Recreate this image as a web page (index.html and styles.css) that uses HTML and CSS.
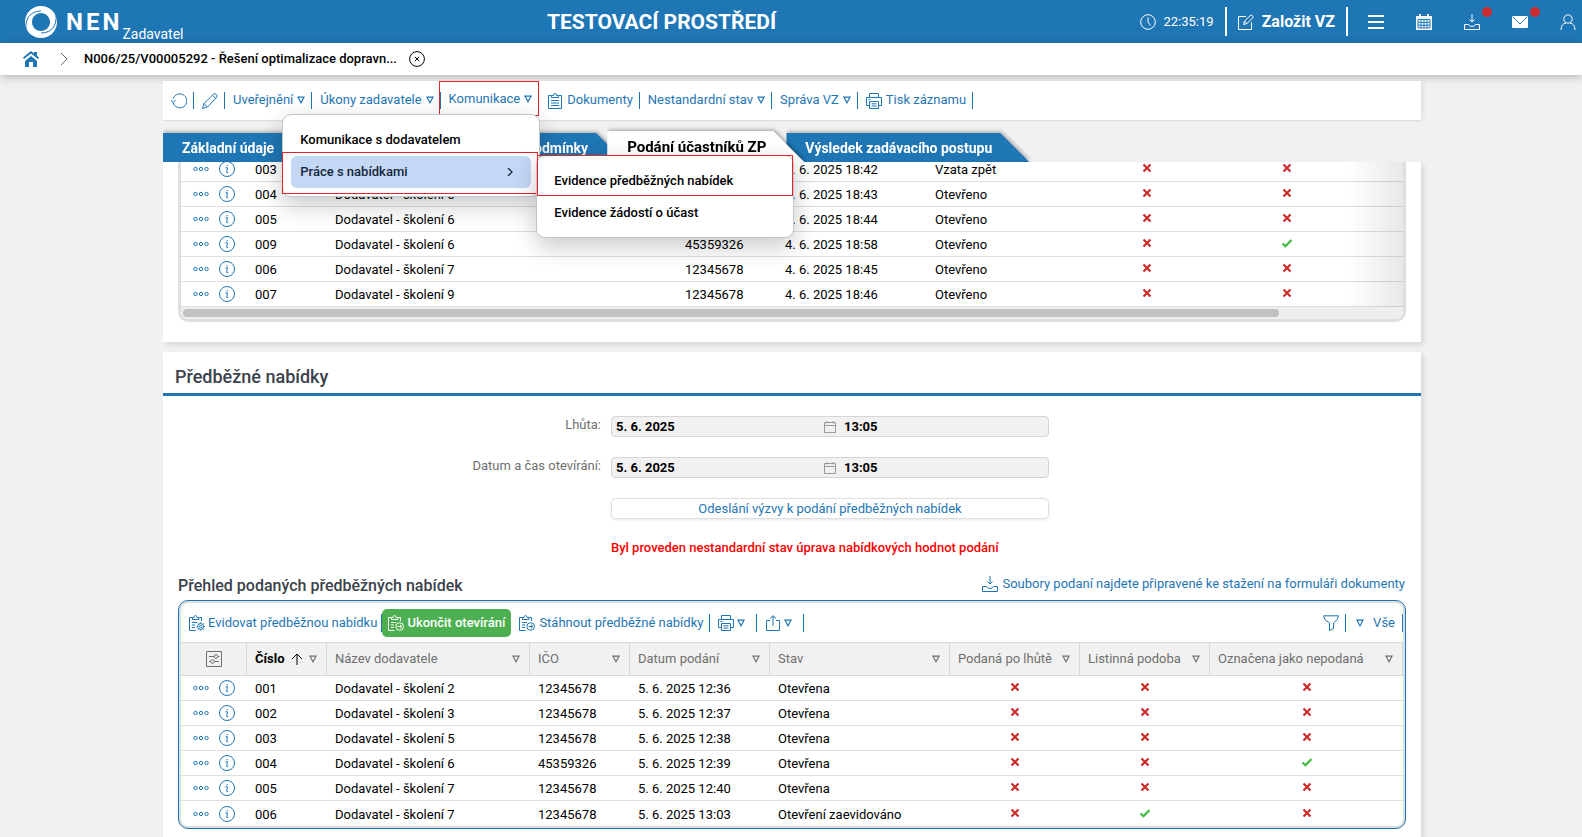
FILE: index.html
```html
<!DOCTYPE html>
<html lang="cs">
<head>
<meta charset="utf-8">
<title>NEN – Podání účastníků ZP</title>
<link rel="stylesheet" href="styles.css">
</head>
<body>
<svg class="sprite" aria-hidden="true">
  <symbol id="tri" viewBox="0 0 8 8"><path d="M1 1.200h6L4 6.800z"/></symbol>
  <symbol id="dots" viewBox="0 0 16 6"><circle cx="2.500" cy="3" r="1.700"/><circle cx="8" cy="3" r="1.700"/><circle cx="13.500" cy="3" r="1.700"/></symbol>
  <symbol id="info" viewBox="0 0 16 16"><circle cx="8" cy="8" r="7.500"/><path d="M6.500 6.800h2L7.600 11.300q0 .8 1.600.3M8.200 4v1.300"/></symbol>
  <symbol id="cross" viewBox="0 0 10 10"><path d="M1.500 1.500l7 7M8.500 1.500l-7 7"/></symbol>
  <symbol id="check" viewBox="0 0 10 10"><path d="M.5 5.500l3 2.700L9.500 2"/></symbol>
  <symbol id="printer" viewBox="0 0 16 16"><path d="M3.500 4V.5h9V4M3.500 12.500h-3v-8h15v8h-3M3.500 8.500h9v7h-9zM5.500 10.800h5M5.500 13h5M2.500 6.500h2"/></symbol>
  <symbol id="clip" viewBox="0 0 16 16"><path d="M4.500 2.500h-3v13h13v-13h-3M4.500 4.500v-2h2q0-2 1.500-2t1.500 2h2v2zM4 7.500h8M4 10h8M4 12.500h8"/></symbol>
  <symbol id="clipgear" viewBox="0 0 16 16"><path d="M3.500 2.500h-3v13h6M10.500 2.500h2v3.500M3.500 4.500v-2h1.500q0-2 1.500-2t1.500 2h2v2zM3 7.500h5M3 10h3M3 12.500h3"/><circle cx="11.700" cy="11.500" r="3"/><circle cx="11.700" cy="11.500" r="1.200"/><path d="M11.700 7.300v1.200M11.700 14.500v1.200M7.500 11.500h1.200M14.700 11.500H16M8.700 8.500l.9.9M13.800 13.600l.9.900M14.700 8.500l-.9.900M9.600 13.600l-.9.900"/></symbol>
  <symbol id="cliparrow" viewBox="0 0 16 16"><path d="M3.500 2.500h-3v13h6M10.500 2.500h2v3.500M3.500 4.500v-2h1.500q0-2 1.500-2t1.500 2h2v2zM3 7.500h5M3 10h3M3 12.500h3"/><circle cx="11.700" cy="11.500" r="3.800"/><path d="M9.500 11.500h4M12 9.800l1.800 1.700L12 13.200"/></symbol>
  <symbol id="tray" viewBox="0 0 16 16"><path d="M8 0v8M5.500 5.500L8 8l2.500-2.500M4.500 10.500h-4v5h15v-5h-4q-1 2-3.500 2t-3.500-2z"/></symbol>
  <symbol id="cal" viewBox="0 0 12 12"><path d="M.5 1.500h11v10H.5zM.5 4.500h11M3 0v2.500M9 0v2.500"/></symbol>
</svg>

<header class="topbar">
  <a class="brand" href="#">
    <svg class="logo" viewBox="0 0 32 32" aria-hidden="true"><path fill-rule="evenodd" d="M16 0C25 0 32 7 32 16S25 32 16 32 0 25 0 16 7 0 16 0zM16 7C11 7 7 11 7 16S11 25 16 25 25 21 25 16 21 7 16 7z"/><path class="logo-cut" d="M1 23C0 13 5 5 16 5M31 9c1 10-4 18-15 18"/></svg>
    <span class="brand-name">NEN</span><span class="brand-role">Zadavatel</span>
  </a>
  <strong class="env">TESTOVACÍ PROSTŘEDÍ</strong>
  <div class="tools">
    <span class="clock"><svg class="i16" viewBox="0 0 16 16"><circle cx="8" cy="8" r="7.300"/><path d="M8 3.500V8l2.500 3.500"/></svg>22:35:19</span>
    <button class="create"><svg class="i16" viewBox="0 0 16 16"><path d="M8 2.500H.5v13h13V8M5.500 10.500l1-3.500L13 .8 15.500 3 9 9.500zM6.500 7L9 9.500"/></svg>Založit VZ</button>
    <button class="tool" aria-label="Nabídka"><svg class="i16 thick" viewBox="0 0 16 16"><path d="M0 2h16M0 8h16M0 14h16"/></svg></button>
    <button class="tool" aria-label="Kalendář"><svg class="i16" viewBox="0 0 16 16"><path class="solid" d="M0 2h3V0h2v2h6V0h2v2h3v14H0z"/><path class="grid" d="M2 5.500h12v8.500H2zM2 8.300h12M2 11.200h12M5 5.500V14M8 5.500V14M11 5.500V14"/></svg></button>
    <button class="tool dot" aria-label="Stažené soubory"><svg class="i16"><use href="#tray"/></svg></button>
    <button class="tool dot" aria-label="Zprávy"><svg class="i16" viewBox="0 0 16 16"><rect class="solid" y="2" width="16" height="12" rx="1"/><path class="grid" d="M1 3l7 7 7-7"/></svg></button>
    <button class="tool" aria-label="Uživatel"><svg class="i16" viewBox="0 0 16 16"><circle cx="8" cy="5" r="4.200"/><path d="M1 16q0-6 5-7M15 16q0-6-5-7"/></svg></button>
  </div>
</header>

<nav class="crumbs" aria-label="Drobečková navigace">
  <a href="#" aria-label="Domů"><svg class="i16 home" viewBox="0 0 16 16"><path d="M8 5l6 5v6h-4v-5H6v5H2v-6z"/><path d="M8 0l8 6.500-1 1.500-7-5.500L1 8 0 6.500zM11 1h3v4l-3-2z"/></svg></a>
  <svg class="chev" viewBox="0 0 8 12"><path d="M1 0l6 6-6 6"/></svg>
  <a class="crumb" href="#">N006/25/V00005292 - Řešení optimalizace dopravn...</a>
  <button class="close" aria-label="Zavřít"><svg class="i16" viewBox="0 0 16 16"><circle cx="8" cy="8" r="7.400"/><path d="M5.800 5.800l4.400 4.400M10.200 5.800l-4.400 4.400"/></svg></button>
</nav>

<main class="page">
  <div class="actions">
    <button aria-label="Obnovit"><svg class="i16" viewBox="0 0 16 16"><path d="M2 9.500a7 7 0 1 0 .2-4M0 7l2 2.500L4.500 7"/></svg></button>
    <button aria-label="Upravit"><svg class="i16" viewBox="0 0 16 16"><path d="M.5 15.500l1.500-5L12 .8q1-.6 2.200.5t.8 2.500L5.500 14zM2 10.500L5.500 14M10.500 2.300l3.500 3.500"/></svg></button>
    <button>Uveřejnění<svg class="tri"><use href="#tri"/></svg></button>
    <button>Úkony zadavatele<svg class="tri"><use href="#tri"/></svg></button>
    <div class="menu-host">
      <button>Komunikace<svg class="tri"><use href="#tri"/></svg></button>
      <ul class="menu">
        <li><a href="#">Komunikace s dodavatelem</a></li>
        <li class="marked"><a class="current" href="#">Práce s nabídkami<svg class="go" viewBox="0 0 6 8"><path d="M1 0l4 4-4 4"/></svg></a></li>
      </ul>
      <ul class="menu submenu">
        <li class="marked"><a href="#">Evidence předběžných nabídek</a></li>
        <li><a href="#">Evidence žádostí o účast</a></li>
      </ul>
    </div>
    <button><svg class="i16"><use href="#clip"/></svg>Dokumenty</button>
    <button>Nestandardní stav<svg class="tri"><use href="#tri"/></svg></button>
    <button>Správa VZ<svg class="tri"><use href="#tri"/></svg></button>
    <button><svg class="i16"><use href="#printer"/></svg>Tisk záznamu</button>
  </div>

  <nav class="tabs" aria-label="Záložky">
    <span class="tab"><a href="#">Základní údaje</a></span>
    <span class="tab wide"><a href="#">Zadávací podmínky</a></span>
    <span class="tab active"><a href="#">Podání účastníků ZP</a></span>
    <span class="tab"><a href="#">Výsledek zadávacího postupu</a></span>
  </nav>

  <section class="card entries">
    <div class="frame">
      <table class="grid-table first">
        <colgroup><col class="w66"><col class="w80"><col class="w350"><col class="w100"><col class="w150"><col class="w150"><col class="w140"><col class="w140"><col></colgroup>
        <tbody>
          <tr><td class="row-tools"><svg class="dots"><use href="#dots"/></svg><svg class="i16"><use href="#info"/></svg></td><td>003</td><td>Dodavatel - školení 3</td><td>12345678</td><td>4. 6. 2025 18:42</td><td>Vzata zpět</td><td class="flag"><svg class="no"><use href="#cross"/></svg></td><td class="flag"><svg class="no"><use href="#cross"/></svg></td><td></td></tr>
          <tr><td class="row-tools"><svg class="dots"><use href="#dots"/></svg><svg class="i16"><use href="#info"/></svg></td><td>004</td><td>Dodavatel - školení 5</td><td>12345678</td><td>4. 6. 2025 18:43</td><td>Otevřeno</td><td class="flag"><svg class="no"><use href="#cross"/></svg></td><td class="flag"><svg class="no"><use href="#cross"/></svg></td><td></td></tr>
          <tr><td class="row-tools"><svg class="dots"><use href="#dots"/></svg><svg class="i16"><use href="#info"/></svg></td><td>005</td><td>Dodavatel - školení 6</td><td>12345678</td><td>4. 6. 2025 18:44</td><td>Otevřeno</td><td class="flag"><svg class="no"><use href="#cross"/></svg></td><td class="flag"><svg class="no"><use href="#cross"/></svg></td><td></td></tr>
          <tr><td class="row-tools"><svg class="dots"><use href="#dots"/></svg><svg class="i16"><use href="#info"/></svg></td><td>009</td><td>Dodavatel - školení 6</td><td>45359326</td><td>4. 6. 2025 18:58</td><td>Otevřeno</td><td class="flag"><svg class="no"><use href="#cross"/></svg></td><td class="flag"><svg class="yes"><use href="#check"/></svg></td><td></td></tr>
          <tr><td class="row-tools"><svg class="dots"><use href="#dots"/></svg><svg class="i16"><use href="#info"/></svg></td><td>006</td><td>Dodavatel - školení 7</td><td>12345678</td><td>4. 6. 2025 18:45</td><td>Otevřeno</td><td class="flag"><svg class="no"><use href="#cross"/></svg></td><td class="flag"><svg class="no"><use href="#cross"/></svg></td><td></td></tr>
          <tr><td class="row-tools"><svg class="dots"><use href="#dots"/></svg><svg class="i16"><use href="#info"/></svg></td><td>007</td><td>Dodavatel - školení 9</td><td>12345678</td><td>4. 6. 2025 18:46</td><td>Otevřeno</td><td class="flag"><svg class="no"><use href="#cross"/></svg></td><td class="flag"><svg class="no"><use href="#cross"/></svg></td><td></td></tr>
        </tbody>
      </table>
      <div class="track"><div class="thumb"></div></div>
    </div>
  </section>

  <section class="card bids">
    <h2>Předběžné nabídky</h2>
    <form class="form">
      <label for="deadline">Lhůta:</label>
      <div class="field"><input id="deadline" value="5. 6. 2025" readonly><svg class="cal"><use href="#cal"/></svg><input aria-label="Lhůta, čas" value="13:05" readonly></div>
      <label for="opening">Datum a čas otevírání:</label>
      <div class="field"><input id="opening" value="5. 6. 2025" readonly><svg class="cal"><use href="#cal"/></svg><input aria-label="Otevírání, čas" value="13:05" readonly></div>
      <button class="send" type="button">Odeslání výzvy k podání předběžných nabídek</button>
      <p class="warn">Byl proveden nestandardní stav úprava nabídkových hodnot podání</p>
    </form>
    <div class="list-head">
      <h3>Přehled podaných předběžných nabídek</h3>
      <a href="#"><svg class="i16"><use href="#tray"/></svg>Soubory podaní najdete připravené ke stažení na formuláři dokumenty</a>
    </div>
    <div class="frame selected">
      <div class="list-tools">
        <button><svg class="i16"><use href="#clipgear"/></svg>Evidovat předběžnou nabídku</button>
        <button class="finish"><svg class="i16"><use href="#cliparrow"/></svg>Ukončit otevírání</button>
        <button><svg class="i16"><use href="#cliparrow"/></svg>Stáhnout předběžné nabídky</button>
        <button class="icon-drop" aria-label="Tisk"><svg class="i16"><use href="#printer"/></svg><svg class="tri"><use href="#tri"/></svg></button>
        <button class="icon-drop" aria-label="Export"><svg class="i16" viewBox="0 0 16 16"><path d="M5 5.500H1.500v10h13v-10H11M8 11V.8M5 3.500L8 .8l3 2.700"/></svg><svg class="tri"><use href="#tri"/></svg></button>
        <button class="filter" aria-label="Filtr"><svg class="i16" viewBox="0 0 16 16"><path d="M.5.800h15q0 4-5 7.200v5.500L6.500 15.500V8Q.5 5 .5.800z"/></svg></button>
        <button class="all"><svg class="tri"><use href="#tri"/></svg>Vše</button>
      </div>
      <table class="grid-table second">
        <colgroup><col class="w66"><col class="w80"><col class="w203"><col class="w100"><col class="w140"><col class="w180"><col class="w130"><col class="w130"><col></colgroup>
        <thead>
          <tr>
            <th class="setup"><svg class="i16" viewBox="0 0 16 16"><path d="M.5.500h15v15H.5zM3 5.500h5M12 5.500h1.500M3 10.500h1.500M8.500 10.500H13"/><circle cx="10" cy="5.500" r="1.800"/><circle cx="6.500" cy="10.500" r="1.800"/></svg></th>
            <th class="sorted"><div>Číslo<svg class="arrow" viewBox="0 0 12 12"><path d="M6 12V1M1 6l5-5 5 5"/></svg><svg class="tri"><use href="#tri"/></svg></div></th>
            <th><div>Název dodavatele<svg class="tri"><use href="#tri"/></svg></div></th>
            <th><div>IČO<svg class="tri"><use href="#tri"/></svg></div></th>
            <th><div>Datum podání<svg class="tri"><use href="#tri"/></svg></div></th>
            <th><div>Stav<svg class="tri"><use href="#tri"/></svg></div></th>
            <th><div>Podaná po lhůtě<svg class="tri"><use href="#tri"/></svg></div></th>
            <th><div>Listinná podoba<svg class="tri"><use href="#tri"/></svg></div></th>
            <th><div>Označena jako nepodaná<svg class="tri"><use href="#tri"/></svg></div></th>
          </tr>
        </thead>
        <tbody>
          <tr><td class="row-tools"><svg class="dots"><use href="#dots"/></svg><svg class="i16"><use href="#info"/></svg></td><td>001</td><td>Dodavatel - školení 2</td><td>12345678</td><td>5. 6. 2025 12:36</td><td>Otevřena</td><td class="flag"><svg class="no"><use href="#cross"/></svg></td><td class="flag"><svg class="no"><use href="#cross"/></svg></td><td class="flag"><svg class="no"><use href="#cross"/></svg></td></tr>
          <tr><td class="row-tools"><svg class="dots"><use href="#dots"/></svg><svg class="i16"><use href="#info"/></svg></td><td>002</td><td>Dodavatel - školení 3</td><td>12345678</td><td>5. 6. 2025 12:37</td><td>Otevřena</td><td class="flag"><svg class="no"><use href="#cross"/></svg></td><td class="flag"><svg class="no"><use href="#cross"/></svg></td><td class="flag"><svg class="no"><use href="#cross"/></svg></td></tr>
          <tr><td class="row-tools"><svg class="dots"><use href="#dots"/></svg><svg class="i16"><use href="#info"/></svg></td><td>003</td><td>Dodavatel - školení 5</td><td>12345678</td><td>5. 6. 2025 12:38</td><td>Otevřena</td><td class="flag"><svg class="no"><use href="#cross"/></svg></td><td class="flag"><svg class="no"><use href="#cross"/></svg></td><td class="flag"><svg class="no"><use href="#cross"/></svg></td></tr>
          <tr><td class="row-tools"><svg class="dots"><use href="#dots"/></svg><svg class="i16"><use href="#info"/></svg></td><td>004</td><td>Dodavatel - školení 6</td><td>45359326</td><td>5. 6. 2025 12:39</td><td>Otevřena</td><td class="flag"><svg class="no"><use href="#cross"/></svg></td><td class="flag"><svg class="no"><use href="#cross"/></svg></td><td class="flag"><svg class="yes"><use href="#check"/></svg></td></tr>
          <tr><td class="row-tools"><svg class="dots"><use href="#dots"/></svg><svg class="i16"><use href="#info"/></svg></td><td>005</td><td>Dodavatel - školení 7</td><td>12345678</td><td>5. 6. 2025 12:40</td><td>Otevřena</td><td class="flag"><svg class="no"><use href="#cross"/></svg></td><td class="flag"><svg class="no"><use href="#cross"/></svg></td><td class="flag"><svg class="no"><use href="#cross"/></svg></td></tr>
          <tr><td class="row-tools"><svg class="dots"><use href="#dots"/></svg><svg class="i16"><use href="#info"/></svg></td><td>006</td><td>Dodavatel - školení 7</td><td>12345678</td><td>5. 6. 2025 13:03</td><td>Otevření zaevidováno</td><td class="flag"><svg class="no"><use href="#cross"/></svg></td><td class="flag"><svg class="yes"><use href="#check"/></svg></td><td class="flag"><svg class="no"><use href="#cross"/></svg></td></tr>
        </tbody>
      </table>
    </div>
  </section>
</main>
</body>
</html>
```

FILE: styles.css
```css
:root {
  --blue: #1f76b5;
  --line: #dedfe1;
  --bg: #f1f1f1;
}

* { box-sizing: border-box; }

body {
  margin: 0;
  height: 100vh;
  overflow: hidden;
  display: flex;
  flex-direction: column;
  background: var(--bg);
  color: #000;
  font: 13px/16px Roboto, "Liberation Sans", sans-serif;
}

button {
  border: 0;
  padding: 0;
  background: none;
  color: inherit;
  font: inherit;
  white-space: nowrap;
  cursor: pointer;
}

a { color: inherit; text-decoration: none; }
h2, h3, p, ul { margin: 0; padding: 0; }
ul { list-style: none; }
svg { display: block; flex: none; fill: none; stroke: currentColor; }

.sprite { position: absolute; width: 0; height: 0; }
.i16 { width: 16px; height: 16px; }
.tri { width: 8px; height: 8px; stroke-width: 1.2; }

/* Top bar */
.topbar {
  flex: none;
  display: flex;
  align-items: center;
  justify-content: space-between;
  height: 43px;
  padding: 0 6px 0 25px;
  background: var(--blue);
  color: #fff;
}
.brand { display: flex; align-items: center; height: 43px; }
.logo { width: 32px; height: 32px; fill: #fff; stroke: none; }
.logo-cut { fill: none; stroke: var(--blue); stroke-width: 1; }
.brand-name { margin-left: 9px; font-size: 24px; font-weight: 700; letter-spacing: 3px; }
.brand-role { align-self: flex-end; padding-bottom: 1px; font-size: 14px; }
.env { font-size: 21px; font-weight: 700; }
.tools { display: flex; align-items: center; justify-content: flex-end; }
.clock { display: flex; align-items: center; gap: 8px; }
.create {
  display: flex;
  align-items: center;
  gap: 8px;
  height: 29px;
  margin: 0 20px 0 11px;
  padding: 0 11px;
  border: solid #fff;
  border-width: 0 2px;
  font-size: 16px;
  font-weight: 700;
}
.tool { position: relative; margin-left: 32px; }
.create + .tool { margin-left: 0; }
.dot::after {
  content: "";
  position: absolute;
  top: -7px;
  right: -12px;
  width: 10px;
  height: 10px;
  border-radius: 50%;
  background: #cb2b2b;
}
.thick { stroke-width: 2; }
.solid { fill: currentColor; stroke: none; }
.grid { stroke: var(--blue); }

/* Breadcrumb */
.crumbs {
  flex: none;
  position: relative;
  z-index: 3;
  display: flex;
  align-items: center;
  height: 32px;
  padding-left: 23px;
  background: #fff;
  box-shadow: 0 2px 10px rgba(0, 0, 0, .25);
}
.home { fill: var(--blue); stroke: none; }
.chev { width: 8px; height: 12px; margin: 0 16px 0 21px; stroke: #666; }
.crumb { font-weight: 500; }
.close { margin-left: 12px; }

/* Page column */
.page {
  flex: 1;
  display: flex;
  flex-direction: column;
  margin: 6px 161px 0 163px;
}
.card { background: #fff; box-shadow: 3px 3px 5px rgba(0, 0, 0, .1); }

/* Record actions */
.actions {
  position: relative;
  z-index: 4;
  display: flex;
  align-items: center;
  height: 40px;
  padding-left: 8px;
  background: #fff;
  border-bottom: 1px solid var(--line);
  box-shadow: 4px 0 4px -1px rgba(0, 0, 0, .06);
  color: var(--blue);
}
.actions > button, .menu-host > button {
  display: flex;
  align-items: center;
  gap: 4px;
  height: 17px;
  padding: 0 6px 2px 8px;
  border-right: 1px solid var(--blue);
}
.actions > button:first-child { padding-left: 0; }
.actions .i16 { margin-top: 2px; }
.menu-host {
  position: relative;
  align-self: flex-start;
  display: flex;
  align-items: center;
  height: 35px;
  padding-top: 3px;
  border: 1px solid #e3242b;
  margin-left: -2px;
}
.menu-host > button { border: 0; border-left: 1px solid var(--blue); }

.menu {
  position: absolute;
  top: 32px;
  right: -2px;
  width: 258px;
  padding: 9px 8px 8px;
  background: #fff;
  border: 1px solid #c4c4c6;
  border-radius: 9px;
  box-shadow: 0 8px 24px rgba(0, 0, 0, .22);
  color: #000;
  font-weight: 500;
}
.submenu { top: 73px; right: -256px; }
.menu li { position: relative; }
.menu a {
  display: flex;
  align-items: center;
  justify-content: space-between;
  height: 32px;
  padding: 0 18px 0 9px;
  border-radius: 6px;
}
.menu .current { background: #c3d8f5; color: #16263c; }
.go { width: 6px; height: 8px; stroke-width: 1.3; }
.marked::after {
  content: "";
  position: absolute;
  inset: -4px -7px -6px -9px;
  border: 1px solid #e3242b;
}
.submenu .marked::after { inset: -10px -8px 1px -8px; }

/* Tabs */
.tabs {
  position: relative;
  z-index: 2;
  display: flex;
  align-items: flex-end;
  height: 41px;
  background: var(--bg);
  color: #fff;
  font-size: 14px;
  font-weight: 700;
}
.tab { position: relative; filter: drop-shadow(1px -1px 2px rgba(0, 0, 0, .35)); clip-path: inset(-6px -8px 0 0); }
.tab + .tab { margin-left: -18px; }
.tab:nth-child(1) { z-index: 3; }
.tab:nth-child(2) { z-index: 2; }
.tab a {
  display: flex;
  align-items: center;
  height: 29px;
  padding: 0 37px 0 19px;
  background: var(--blue);
  clip-path: polygon(0 0, calc(100% - 29px) 0, 100% 100%, 0 100%);
}
.wide { flex: 0 0 332px; }
.wide a { justify-content: flex-end; }
.tab.active { z-index: 3; color: #000; font-size: 15px; }
.active a {
  height: 31px;
  padding: 0 38px 0 20px;
  background: #fff;
  clip-path: polygon(0 0, calc(100% - 31px) 0, 100% 100%, 0 100%);
}

/* Framed tables */
.entries { padding: 0 15px 20px; }
.frame {
  position: relative;
  border: 3px solid var(--line);
  border-radius: 10px;
  overflow: hidden;
}
.entries .frame { margin-top: -5px; border-top: 0; border-radius: 0 0 10px 10px; }
.entries .frame::after {
  content: "";
  position: absolute;
  inset: 0 0 12px auto;
  width: 56px;
  background: linear-gradient(to right, transparent, rgba(0, 0, 0, .09));
}
.grid-table { width: 100%; table-layout: fixed; border-collapse: separate; border-spacing: 0; }
.grid-table td {
  height: 25px;
  padding: 2px 8px 0;
  border-bottom: 1px solid var(--line);
  white-space: nowrap;
}
.second tr:last-child td { border-bottom: 0; }
.row-tools { color: var(--blue); }
.grid-table .row-tools { padding: 0 12px; }
.row-tools svg { display: inline-block; vertical-align: middle; }
.row-tools .dots { width: 16px; height: 6px; margin-right: 10px; }
.flag svg { width: 10px; height: 10px; margin: 0 auto 4px; stroke-width: 2.2; }
.no { stroke: #cb2b2b; }
.yes { stroke: #3bbb3b; }
.w66 { width: 66px; }
.w80 { width: 80px; }
.w100 { width: 100px; }
.w130 { width: 130px; }
.w140 { width: 140px; }
.w150 { width: 150px; }
.w180 { width: 180px; }
.w203 { width: 203px; }
.w350 { width: 350px; }

.track { height: 12px; padding: 2px; background: #eee; }
.thumb { width: 90%; height: 8px; border-radius: 4px; background: #c1c1c1; }

/* Preliminary bids */
.bids { flex: 1; margin-top: 10px; }
.bids h2 {
  height: 44px;
  padding: 4px 12px 0;
  border-bottom: 3px solid var(--blue);
  color: #3a424b;
  font-size: 18px;
  font-weight: 500;
  line-height: 42px;
}
.form {
  display: grid;
  grid-template-columns: 438px 438px;
  column-gap: 10px;
  row-gap: 20px;
  padding-top: 20px;
}
.form label { padding-top: 1px; text-align: right; color: #6f6f6f; }
.field {
  display: grid;
  grid-template-columns: 1fr 12px 1fr;
  align-items: center;
  column-gap: 4px;
  height: 21px;
  border: 1px solid #d5d5d5;
  border-radius: 4px;
  background: var(--bg);
}
.field input {
  min-width: 0;
  height: 19px;
  padding: 0 4px;
  border: 0;
  background: none;
  font: 700 13px/19px Roboto, "Liberation Sans", sans-serif;
}
.cal { width: 12px; height: 12px; stroke: #9a9a9a; }
.send, .warn { grid-column: 2; }
.send {
  height: 21px;
  border: 1px solid var(--line);
  border-radius: 5px;
  box-shadow: 0 1px 3px rgba(0, 0, 0, .1);
  color: var(--blue);
}
.warn { color: #f00; font-weight: 500; line-height: 18px; }

.list-head {
  display: flex;
  align-items: center;
  justify-content: space-between;
  margin: 17px 16px 0 15px;
  color: var(--blue);
}
.list-head h3 { color: #3a424b; font-size: 16px; font-weight: 500; line-height: 24px; }
.list-head a { display: flex; gap: 4px; padding-bottom: 4px; }

.frame.selected {
  margin: 2px 15px 0;
  border: 1px solid var(--blue);
  padding: 2px;
  background: var(--line);
}
.list-tools, .second { background: #fff; }
.list-tools { border-radius: 8px 8px 0 0; }
.second { border-radius: 0 0 6px 6px; }
.list-tools {
  display: flex;
  align-items: center;
  height: 39px;
  padding-left: 8px;
  color: var(--blue);
}
.list-tools button {
  display: flex;
  align-items: center;
  gap: 4px;
  height: 18px;
  padding: 0 6px 0 8px;
  border-right: 1px solid var(--blue);
}
.list-tools button:first-child { padding: 0 4px 0 0; gap: 3px; }
.list-tools .finish {
  gap: 3px;
  height: 28px;
  padding: 0 6px;
  border: 0;
  border-radius: 5px;
  background: #4caf50;
  color: #fff;
  font-weight: 500;
}
.list-tools .icon-drop { padding-right: 11px; gap: 3px; }
.list-tools .filter { margin-left: auto; }
.list-tools .all { gap: 9px; padding: 0 7px 0 10px; }

.second th {
  height: 34px;
  padding: 0 9px 0 8px;
  border: solid #d8d8d8;
  border-width: 1px 1px 1px 0;
  background: var(--bg);
  color: #6f6f6f;
  font-weight: 400;
  text-align: left;
  white-space: nowrap;
}
.second th > div { display: flex; align-items: center; justify-content: space-between; }
.second .setup svg { margin: 0 auto; }
.second .setup { padding: 0; }
.second .sorted { color: #000; font-weight: 700; }
.sorted .tri { stroke: #6f6f6f; }
.arrow { width: 12px; height: 12px; }
```
